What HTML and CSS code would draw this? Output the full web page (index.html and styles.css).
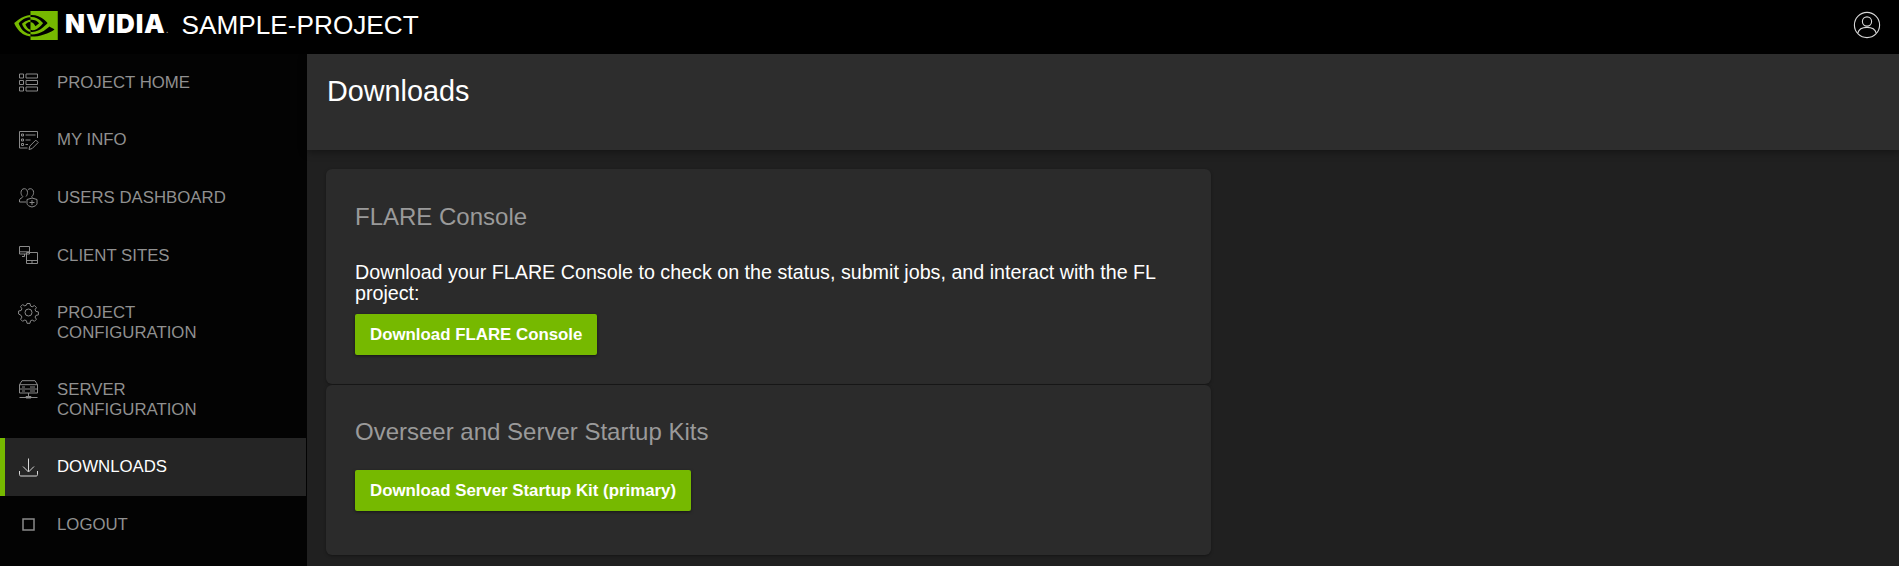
FILE: index.html

```html
<!doctype html>
<html>
<head>
	<meta charset='utf-8'>
	<title>Downloads</title>
	<link rel="stylesheet" href="styles.css">
</head>
<body>
<header class='top-bar'>
	<div class='brand'>
		<svg class='brand-eye' viewBox='0 4 24 16'><path fill='#76b900' d='M8.948 8.798v-1.43a6.7 6.7 0 0 1 .424-.018c3.922-.124 6.493 3.374 6.493 3.374s-2.774 3.851-5.75 3.851c-.398 0-.787-.062-1.158-.185v-4.346c1.528.185 1.837.857 2.747 2.385l2.04-1.714s-1.492-1.952-4-1.952a6.016 6.016 0 0 0-.796.035m0-4.735v2.138l.424-.027c5.45-.185 9.01 4.47 9.01 4.47s-4.08 4.964-8.33 4.964c-.37 0-.733-.035-1.095-.097v1.325c.3.035.61.062.91.062 3.957 0 6.82-2.023 9.593-4.408.459.371 2.34 1.263 2.73 1.652-2.633 2.208-8.772 3.984-12.253 3.984-.335 0-.653-.018-.971-.053v1.864H24V4.063zm0 10.326v1.131c-3.657-.654-4.673-4.46-4.673-4.46s1.758-1.944 4.673-2.262v1.237H8.94c-1.528-.186-2.73 1.245-2.73 1.245s.68 2.412 2.739 3.11M2.456 10.9s2.164-3.197 6.5-3.533V6.201C4.153 6.59 0 10.653 0 10.653s2.35 6.802 8.948 7.42v-1.237c-4.84-.6-6.492-5.936-6.492-5.936z'/></svg>
		<span class='brand-name'>NVIDIA<span class='brand-dot'>.</span></span>
		<span class='brand-project'>SAMPLE-PROJECT</span>
	</div>
	<svg class='avatar' viewBox='0 0 28 28' fill='none' stroke='#d8d8d8' stroke-width='1.1'><circle cx='14' cy='14' r='12.6'/><circle cx='14' cy='10.5' r='4.6'/><path d='M4.8 22c1-4 4.5-5.6 9.2-5.6s8.200 1.600 9.200 5.600'/></svg>
</header>

<div class='layout'>
	<nav class='side-nav'>
		<a class='nav-item'>
			<svg class='nav-icon' viewBox='0 0 19 19'><path d='M.5 1h4v4h-4zM7 1h11.500v4H7zM.5 7.500h4v4h-4zM7 7.500h11.500v4H7zM.5 14h4v4h-4zM7 14h11.500v4H7z'/></svg>
			<span>Project Home</span>
		</a>
		<a class='nav-item'>
			<svg class='nav-icon' viewBox='0 0 19 19'><path d='M18.500 7V.5H.5v16.500h8M2.500 3h2v2h-2zM6.500 4h10M2.500 8h2v2h-2zM6.500 9h5M2.500 12.500h2v2h-2zM6.500 13.500h2.500M10 18.500l.8-3.400 6-6 2.400 2.400-6 6z'/></svg>
			<span>My Info</span>
		</a>
		<a class='nav-item'>
			<svg class='nav-icon' viewBox='0 0 19 19'><path d='M7 14H.5v-2.200c0-1.300 3.200-1.800 3.300-3.300-1.200-1-1.800-2.300-1.800-4C2 2.300 3.300.7 5.300.7s3.200 1.600 3.200 3.800c0 1.700-.6 3-1.500 4M8.800 2C9.300 1.200 10.200.7 11.300.7c2 0 3.300 1.600 3.300 3.800 0 1.700-.6 3-1.800 4 0 .4.200.7.500 1M13 10l5 1.500v4c0 1.500-2.200 3-5 3.500-2.800-.5-5-2-5-3.500v-4zM13 12v5M10.500 14.500h5'/></svg>
			<span>Users Dashboard</span>
		</a>
		<a class='nav-item'>
			<svg class='nav-icon' viewBox='0 0 19 19'><path d='M.5.500h10v7.500H.5zM.5 5.800h10M5.500 8v2.500H3M7.500 6.500h11v11h-11zM7.500 14.500h11M13 14.500v3'/></svg>
			<span>Client Sites</span>
		</a>
		<a class='nav-item nav-item-tall'>
			<svg class='nav-icon' viewBox='0 0 19 19'><circle cx='9.500' cy='9.500' r='3.500'/><path d='M8 .5h3l.5 2.500 1.700.8 2.200-1.300 2 2-1.300 2.200.8 1.700 2.500.5v3l-2.500.5-.8 1.700 1.300 2.200-2 2-2.200-1.300-1.700.8-.5 2.500H8l-.5-2.500-1.700-.8-2.200 1.300-2-2 1.300-2.200-.8-1.700L-.4 11V8l2.500-.5.800-1.700L1.600 3.600l2-2 2.200 1.300 1.700-.8z'/></svg>
			<span>Project<br>Configuration</span>
		</a>
		<a class='nav-item nav-item-tall'>
			<svg class='nav-icon' viewBox='0 0 19 19'><path d='M3 .7h13l2.500 4v8.300H.5V4.700zM.5 4.700h18M.5 9h18M3 7h3M3 11h3M11 7h5M11 11h5M9.500 13v3.500M.5 17.500h18M7 16.500h5v1.500H7z'/></svg>
			<span>Server<br>Configuration</span>
		</a>
		<a class='nav-item nav-item-active'>
			<svg class='nav-icon' viewBox='0 0 19 19'><path d='M9.500.500v13M4 8.500l5.500 5.500L15 8.500M.5 13v3.500c0 1 .5 1.500 1.500 1.500h15c1 0 1.500-.5 1.500-1.500V13'/></svg>
			<span>Downloads</span>
		</a>
		<a class='nav-item'>
			<svg class='nav-icon' viewBox='0 0 19 19'><path class='logout-box' d='M4 4h11v11H4z'/></svg>
			<span>Logout</span>
		</a>
	</nav>

	<main class='content'>
		<div class='page-head'><h1>Downloads</h1></div>
		<div class='cards'>
			<section class='card'>
				<h2>FLARE Console</h2>
				<p>Download your FLARE Console to check on the status, submit jobs, and interact with the FL project:</p>
				<button class='btn'>Download FLARE Console</button>
			</section>
			<section class='card card-kits'>
				<h2>Overseer and Server Startup Kits</h2>
				<button class='btn'>Download Server Startup Kit (primary)</button>
			</section>
		</div>
	</main>
</div>
</body>
</html>
```

FILE: styles.css

```css
*{margin:0;padding:0;box-sizing:border-box;}
html,body{height:100%;overflow:hidden;}
body{background:#000;color:#fff;font-family:"Liberation Sans",Arial,sans-serif;display:flex;flex-direction:column;}

.top-bar{height:54px;flex:none;display:flex;align-items:center;justify-content:space-between;padding:0 18px 4px 14px;background:#000;}
.brand{display:flex;align-items:center;}
.brand-eye{width:44px;height:29px;display:block;}
.brand-name{margin:2px 0 0 7px;font-family:Inter,"Liberation Sans",sans-serif;font-weight:900;font-size:26px;line-height:29px;letter-spacing:.9px;}
.brand-dot{font-size:10px;font-weight:400;color:#aaa;letter-spacing:0;}
.brand-project{margin:1px 0 0 13px;font-size:26.200px;line-height:29px;}
.avatar{width:28px;height:28px;display:block;}

.layout{flex:1;display:flex;min-height:0;}

.side-nav{width:307px;flex:none;background:#030303;display:flex;flex-direction:column;}
.nav-item{height:57.600px;flex:none;display:flex;align-items:center;padding-left:19px;font-size:16.800px;line-height:20px;color:#909090;text-transform:uppercase;}
.nav-item-tall{height:77px;align-items:flex-start;padding-top:19px;}
.nav-item-active{background:#252525;color:#fff;border-left:5px solid #76b900;padding-left:14px;margin-right:1px;}
.nav-icon{width:19px;height:19px;flex:none;margin-right:19px;fill:none;stroke:#8a8a8a;stroke-width:1;overflow:visible;}
.nav-item-active .nav-icon{stroke:#d8d8d8;}
.logout-box{stroke-width:1.500;}

.content{flex:1;background:#202020;min-width:0;}
.page-head{height:96px;background:#2d2d2d;padding:21px 20px 0;box-shadow:0 2px 8px rgba(0,0,0,.4);}
.page-head h1{font-size:28.800px;line-height:32px;font-weight:400;}

.cards{width:904px;padding:19px 0 0 19px;}
.card{height:215px;margin-bottom:1px;padding:34px 29px 0;background:#2b2b2b;border-radius:6px;box-shadow:0 1px 3px rgba(0,0,0,.35);}
.card-kits{height:170px;padding-top:33px;}
.card h2{font-size:24px;line-height:28px;font-weight:400;color:#9a9a9a;}
.card p{margin-top:31px;font-size:19.700px;line-height:21px;color:#fff;}
.card-kits h2{margin-bottom:24px;}
.btn{display:block;height:41px;margin-top:10px;padding:0 15px;background:#76b900;border:0;border-radius:2px;color:#fff;font-family:"Liberation Sans",Arial,sans-serif;font-size:16.850px;font-weight:700;box-shadow:0 1px 3px rgba(0,0,0,.5);}
.card-kits .btn{margin-top:0;}
```
